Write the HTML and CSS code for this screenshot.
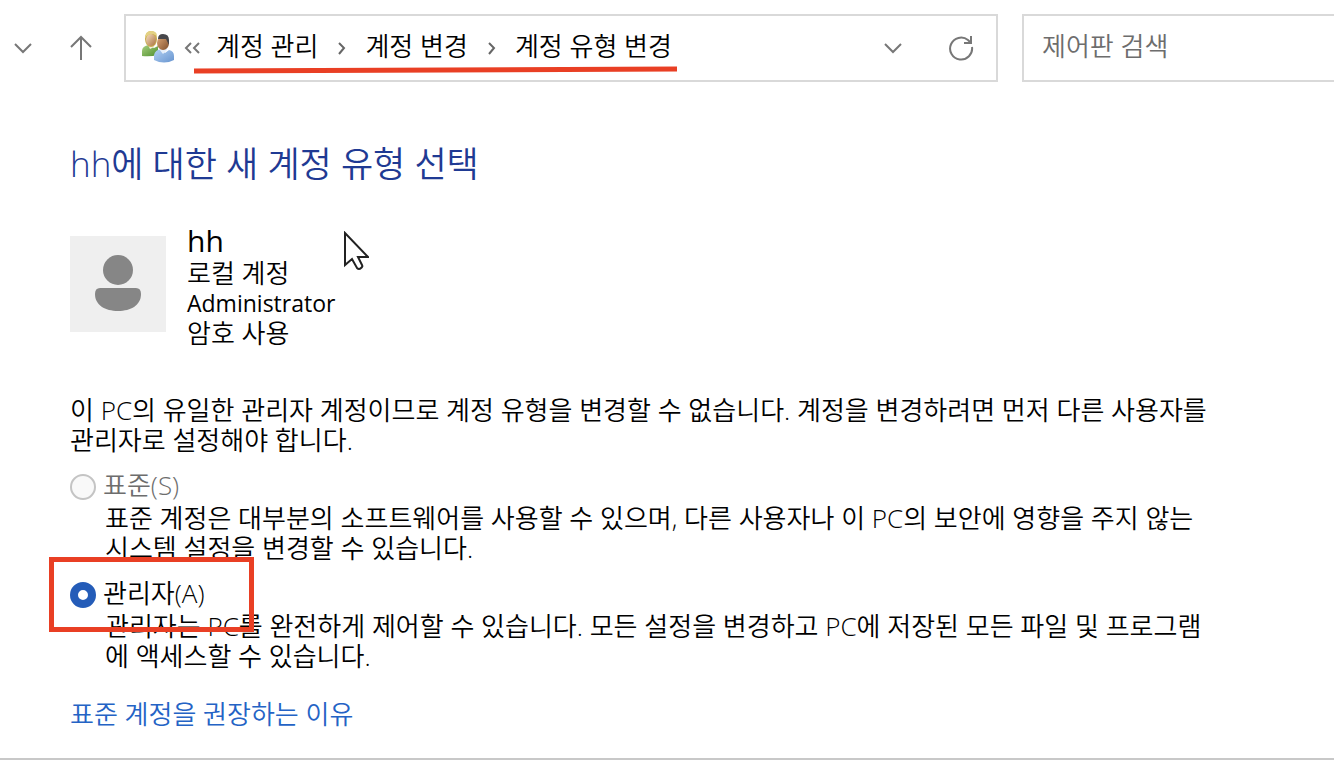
FILE: index.html
```html
<!DOCTYPE html>
<html lang="ko">
<head>
<meta charset="utf-8">
<meta name="viewport" content="width=device-width, initial-scale=1">
<title>계정 유형 변경</title>
<link rel="stylesheet" href="styles.css">
</head>
<body>
<div class="window">
  <header class="toolbar">
    <button class="tool history" type="button" aria-label="최근 위치">
      <svg width="18" height="12" viewBox="0 0 18 12"><path d="M1 2 L9 10 L17 2"/></svg>
    </button>
    <button class="tool up" type="button" aria-label="위로">
      <svg width="24" height="26" viewBox="0 0 24 26"><path d="M12 25 V2 M2 12 L12 2 L22 12"/></svg>
    </button>
    <nav class="address" aria-label="주소">
      <svg class="users" width="34" height="34" viewBox="0 0 34 34">
        <defs>
          <linearGradient id="green" x1="0" y1="0" x2="1" y2="1"><stop offset="0" stop-color="#a8cf80"/><stop offset="1" stop-color="#4f8f2d"/></linearGradient>
          <linearGradient id="blue" x1="0" y1="0" x2="1" y2="1"><stop offset="0" stop-color="#b4d2f4"/><stop offset="1" stop-color="#6794cf"/></linearGradient>
          <linearGradient id="skin" x1="0" y1="0" x2="1" y2="1"><stop offset="0" stop-color="#f6dcc0"/><stop offset="1" stop-color="#a9723f"/></linearGradient>
          <linearGradient id="tan" x1="0" y1="0" x2="1" y2="1"><stop offset="0" stop-color="#dfa978"/><stop offset="1" stop-color="#80502d"/></linearGradient>
        </defs>
        <path d="M1 26 V21 Q1 16 8 15 L13 18 L17 16 V25 Q9 27 1 26Z" fill="url(#green)"/>
        <path d="M7 15 L9 19 L13 17 V13Z" fill="#f4eee0"/>
        <ellipse cx="10" cy="9" rx="6" ry="8" fill="#c9ad4d"/>
        <ellipse cx="10" cy="10" rx="5" ry="6" fill="url(#skin)"/>
        <path d="M4 8 Q4 1 10 1 Q16 1 16 6 L12 4 Q7 4 4 8Z" fill="#e3d183"/>
        <path d="M13 30 V25 Q14 20 20 19 L24 23 L28 20 Q33 21 33 26 V30 Q23 35 13 30Z" fill="url(#blue)"/>
        <path d="M18 19 L22 24 L26 20 V17Z" fill="#e6effa"/>
        <ellipse cx="22" cy="13" rx="6" ry="7" fill="url(#tan)"/>
        <path d="M17 9 Q17 4 22 4 Q28 4 28 10 V15 L25 9Z" fill="#46464a"/>
      </svg>
      <button class="overflow" type="button" aria-label="상위 위치">
        <svg width="17" height="12" viewBox="0 0 17 12"><path d="M7 1 L2 6 L7 11 M15 1 L10 6 L15 11"/></svg>
      </button>
      <div class="crumbs">
        <a href="#">계정 관리</a>
        <svg class="sep" width="9" height="13" viewBox="0 0 9 13"><path d="M2 1 L7 6 L2 12"/></svg>
        <a href="#">계정 변경</a>
        <svg class="sep" width="9" height="13" viewBox="0 0 9 13"><path d="M2 1 L7 6 L2 12"/></svg>
        <a href="#">계정 유형 변경</a>
        <svg class="underline" viewBox="0 0 482 8" preserveAspectRatio="none"><path d="M0 5 L482 3"/></svg>
      </div>
      <button class="tool drop" type="button" aria-label="이전 위치">
        <svg width="18" height="12" viewBox="0 0 18 12"><path d="M1 2 L9 10 L17 2"/></svg>
      </button>
      <button class="tool refresh" type="button" aria-label="새로 고침">
        <svg width="26" height="26" viewBox="0 0 26 26"><path d="M24 12 A11 11 0 1 1 20 5 L22 7 M23 1 V8 H16"/></svg>
      </button>
    </nav>
    <input class="search" type="search" placeholder="제어판 검색" aria-label="제어판 검색">
  </header>

  <main class="content">
    <h1 class="title">hh에 대한 새 계정 유형 선택</h1>

    <section class="account">
      <svg class="avatar" width="96" height="96" viewBox="0 0 96 96">
        <rect width="96" height="96" fill="#efefef"/>
        <circle cx="48" cy="34" r="15" fill="#868686"/>
        <path d="M30 52 H66 Q71 52 71 58 C71 69 61 75 48 75 S25 69 25 58 Q25 52 30 52Z" fill="#868686"/>
      </svg>
      <div class="details">
        <p class="name">hh</p>
        <p>로컬 계정</p>
        <p class="role">Administrator</p>
        <p>암호 사용</p>
      </div>
      <svg class="pointer" width="26" height="40" viewBox="0 0 26 40"><path d="M2 2 V34 L9 28 L14 37 Q16 39 18 37 Q20 36 19 34 L15 26 H25 Z"/></svg>
    </section>

    <p class="notice">이 PC의 유일한 관리자 계정이므로 계정 유형을 변경할 수 없습니다. 계정을 변경하려면 먼저 다른 사용자를<br>관리자로 설정해야 합니다.</p>

    <form class="options">
      <div class="option">
        <input class="radio" type="radio" name="type" id="standard" disabled>
        <label class="label off" for="standard">표준(S)</label>
        <p class="hint">표준 계정은 대부분의 소프트웨어를 사용할 수 있으며, 다른 사용자나 이 PC의 보안에 영향을 주지 않는<br>시스템 설정을 변경할 수 있습니다.</p>
      </div>
      <div class="option">
        <input class="radio" type="radio" name="type" id="admin" checked>
        <label class="label" for="admin">관리자(A)</label>
        <p class="hint">관리자는 PC를 완전하게 제어할 수 있습니다. 모든 설정을 변경하고 PC에 저장된 모든 파일 및 프로그램<br>에 액세스할 수 있습니다.</p>
        <span class="marker"></span>
      </div>
    </form>

    <a class="more" href="#">표준 계정을 권장하는 이유</a>
  </main>
</div>
</body>
</html>
```
FILE: styles.css
```css
* { box-sizing: border-box; }
body {
  margin: 0;
  background: #fff;
  color: #000;
  font-family: "Open Sans", "Noto Sans CJK KR", sans-serif;
  font-size: 26px;
  font-weight: 350;
  line-height: 30px;
}
p, h1 { margin: 0; }
a { color: inherit; text-decoration: none; }
button { padding: 0; border: 0; background: none; }
svg { display: block; flex: none; fill: none; }
.window { overflow: hidden; border-bottom: 2px solid #c8c8c8; padding-bottom: 29px; }

.toolbar { display: flex; align-items: center; padding-top: 14px; }
.tool { display: flex; justify-content: center; stroke: #777; stroke-width: 2; }
.history { margin-left: 14px; }
.up { margin: 0 31px 0 37px; }
.address {
  flex: 874 1 874px;
  display: flex;
  align-items: center;
  height: 68px;
  padding: 0 22px 0 15px;
  border: 2px solid #d9d9d9;
}
.users { margin-bottom: 3px; }
.overflow { margin-left: 9px; stroke: #777; stroke-width: 2; }
.crumbs {
  position: relative;
  display: flex;
  align-items: center;
  gap: 19px;
  margin: 0 auto 4px 15px;
  white-space: nowrap;
}
.sep { margin-top: 5px; stroke: #666; stroke-width: 2; }
.underline {
  position: absolute;
  left: -22px;
  top: 35px;
  width: 483px;
  height: 8px;
  stroke: #e93f24;
  stroke-width: 5;
}
.refresh { margin: 0 0 0 46px; }
.search {
  flex: 314 1 314px;
  min-width: 0;
  height: 68px;
  margin: 0 -2px 0 24px;
  padding: 0 18px 4px;
  border: 2px solid #d9d9d9;
  border-radius: 0;
  background: #fff;
  font: inherit;
  appearance: none;
}
.search::placeholder { color: #6d6d6d; opacity: 1; }

.content { padding: 62px 70px 0; }
.title { color: #1f3a93; font-size: 35px; line-height: 40px; }
.title { font-weight: 350; }
.account { position: relative; display: flex; gap: 21px; margin-top: 40px; }
.avatar { margin-top: 12px; }
.name { font-size: 30px; font-weight: 400; line-height: 34px; }
.role { font-size: 23px; font-weight: 400; }
.pointer { position: absolute; left: 273px; top: 7px; fill: #fff; stroke: #222; stroke-width: 2; }
.notice { margin: 47px -20px 0 0; }
.options { margin: 15px -20px 0 0; }
.option {
  position: relative;
  display: grid;
  grid-template-columns: 26px 1fr;
  column-gap: 7px;
  align-items: center;
  margin-bottom: 15px;
}
.radio {
  appearance: none;
  width: 26px;
  height: 26px;
  margin: 3px 0 0;
  border: 2px solid #c4c4c4;
  border-radius: 50%;
  background: #f9f9f9;
}
.radio:checked { border: 8px solid #245cb8; background: #fff; }
.label { justify-self: start; }
.off { color: #6d6d6d; }
.hint { grid-column: 2; margin: 3px 0 0 2px; }
.marker {
  position: absolute;
  left: -21px;
  top: -21px;
  width: 205px;
  height: 75px;
  border: 5px solid #e93f24;
  pointer-events: none;
}
.more { display: inline-block; margin-top: 13px; color: #2463c5; }
```
